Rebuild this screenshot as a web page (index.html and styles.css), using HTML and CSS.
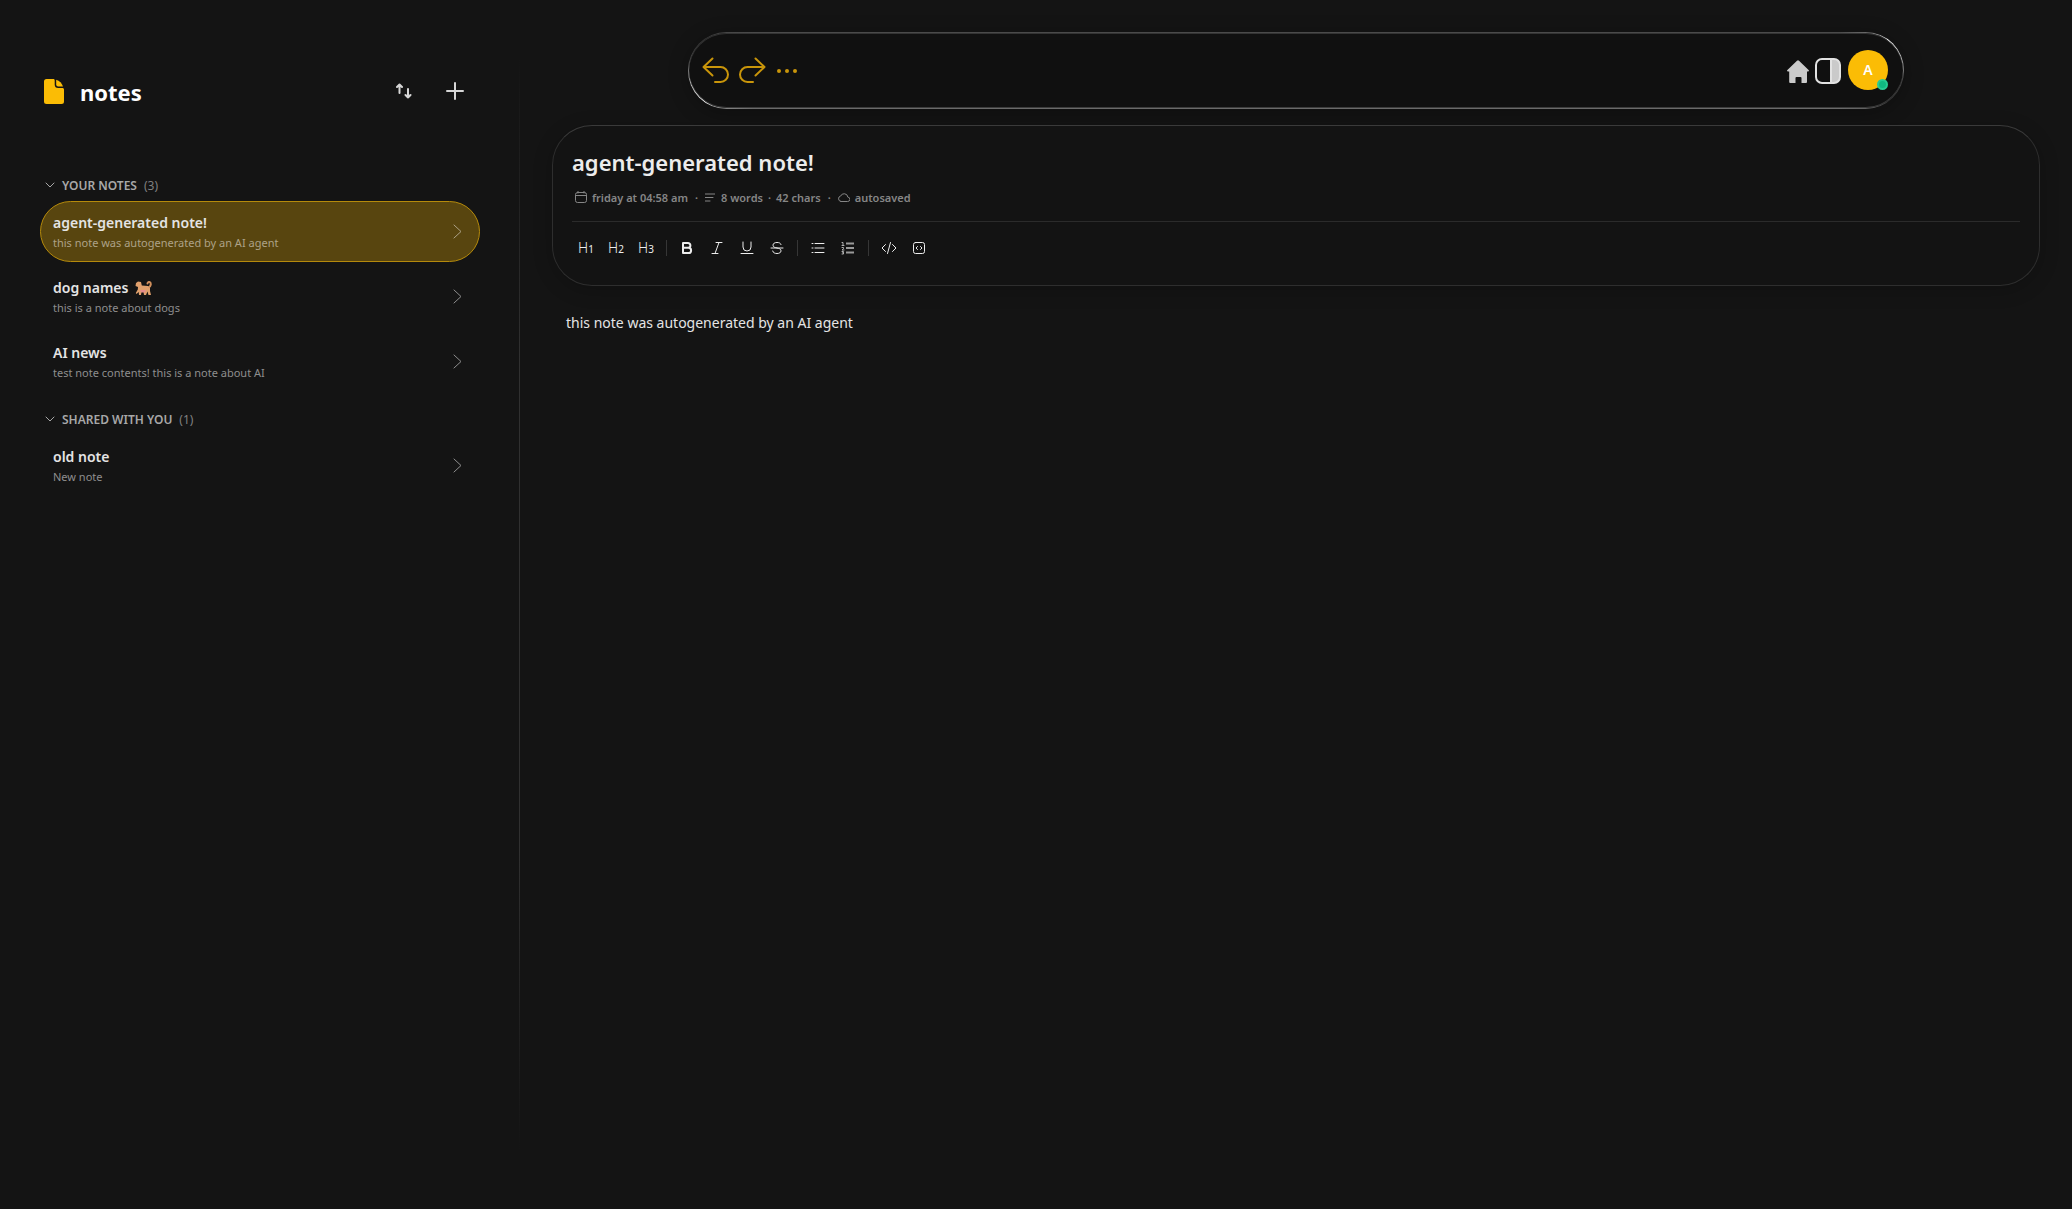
FILE: index.html
```
<!DOCTYPE html>
<html lang="en">
<head>
  <meta charset="UTF-8" />
  <meta name="viewport" content="width=device-width, initial-scale=1" />
  <title>notes</title>
  <link rel="stylesheet" href="styles.css">
</head>
<body>
  <div class="app">
    <aside class="sidebar">
      <header class="sidebar-header">
        <svg class="logo" viewBox="0 0 20 25" aria-hidden="true">
          <path d="M2.500 0h7c.8 0 1.200.7 1.200 1.500v4A3.500 3.500 0 0 0 14.200 9H18.500c.8 0 1.500.7 1.500 1.500V22.500a2.500 2.500 0 0 1-2.500 2.500h-15A2.500 2.500 0 0 1 0 22.500v-20A2.500 2.500 0 0 1 2.500 0z"/>
          <path d="M12.200.8c3.200 1 5.800 3.500 6.800 6.700h-4.800a2 2 0 0 1-2-2z"/>
        </svg>
        <h1>notes</h1>
        <button class="icon-btn" type="button" aria-label="Sort notes">
          <svg width="16" height="16" viewBox="0 0 16 16"><path d="M3.500 10V1.500M1 4l2.500-2.500L6 4M12 6v8.500M9.500 12l2.500 2.500 2.500-2.500"/></svg>
        </button>
        <button class="icon-btn" type="button" aria-label="New note">
          <svg width="18" height="18" viewBox="0 0 18 18"><path d="M9 1v16M1 9h16"/></svg>
        </button>
      </header>

      <nav class="note-groups">
        <section>
          <button class="group-title" type="button" aria-expanded="true">
            <svg width="10" height="6" viewBox="0 0 10 6"><path d="M1 1l4 4 4-4"/></svg>
            YOUR NOTES <span>(3)</span>
          </button>
          <a class="note active" href="#agent">
            <span class="note-text"><strong>agent-generated note!</strong><small>this note was autogenerated by an AI agent</small></span>
            <svg width="9" height="15" viewBox="0 0 9 15"><path d="M1 1l7 6.500L1 14"/></svg>
          </a>
          <a class="note" href="#dogs">
            <span class="note-text"><strong>dog names
              <svg class="dog" width="17" height="15" viewBox="0 0 17 15" aria-hidden="true">
                <path class="tail" d="M13.500 6.500c2.500-.5 3-5 1-5.500-1-.2-2 .3-2 1.500"/>
                <path class="fur" d="M1 2l2-1.500 3 .5.800 3.500L13 5l2 2v3l1 4h-2.500l-1-3.500L11 14H9l-.5-3H6.500L6 14H4l-.3-3L1.500 13 .8 12l2-3.500L3 6 .5 5z"/>
                <path class="belly" d="M5 9h6l-1 2.500H6z"/>
              </svg></strong><small>this is a note about dogs</small></span>
            <svg width="9" height="15" viewBox="0 0 9 15"><path d="M1 1l7 6.500L1 14"/></svg>
          </a>
          <a class="note" href="#ai-news">
            <span class="note-text"><strong>AI news</strong><small>test note contents! this is a note about AI</small></span>
            <svg width="9" height="15" viewBox="0 0 9 15"><path d="M1 1l7 6.500L1 14"/></svg>
          </a>
        </section>
        <section>
          <button class="group-title" type="button" aria-expanded="true">
            <svg width="10" height="6" viewBox="0 0 10 6"><path d="M1 1l4 4 4-4"/></svg>
            SHARED WITH YOU <span>(1)</span>
          </button>
          <a class="note" href="#old-note">
            <span class="note-text"><strong>old note</strong><small>New note</small></span>
            <svg width="9" height="15" viewBox="0 0 9 15"><path d="M1 1l7 6.500L1 14"/></svg>
          </a>
        </section>
      </nav>
    </aside>

    <main class="editor">
      <div class="topbar">
        <button class="history" type="button" aria-label="Undo">
          <svg width="28" height="28" viewBox="0 0 28 28"><path d="M10.500 1.500L1.500 10l9 8.500M2 10h16.500a7.500 7.500 0 0 1 0 15H13"/></svg>
        </button>
        <button class="history" type="button" aria-label="Redo">
          <svg width="28" height="28" viewBox="0 0 28 28"><path d="M17.500 1.500l9 8.500-9 8.500M26 10H9.500a7.500 7.500 0 0 0 0 15H15"/></svg>
        </button>
        <button class="more" type="button" aria-label="More">
          <svg width="20" height="4" viewBox="0 0 20 4"><circle cx="2" cy="2" r="2"/><circle cx="10" cy="2" r="2"/><circle cx="18" cy="2" r="2"/></svg>
        </button>
        <a class="home" href="#home" aria-label="Home">
          <svg width="22" height="24" viewBox="0 0 22 24"><path d="M10 .8a1.500 1.500 0 0 1 2 0l9.600 9.200c.7.700.3 1.500-.6 1.500h-1v10.500a1 1 0 0 1-1 1h-4.500v-5a1 1 0 0 0-1-1h-4a1 1 0 0 0-1 1v5H3.200a1 1 0 0 1-1-1V11.500H1c-.9 0-1.300-.8-.6-1.500z"/></svg>
        </a>
        <button class="panel" type="button" aria-label="Toggle panel">
          <svg width="26" height="26" viewBox="0 0 26 26"><path class="fill" d="M16 1h3a6 6 0 0 1 6 6v12a6 6 0 0 1-6 6h-3z"/><rect x="1" y="1" width="24" height="24" rx="6"/><path d="M16 1v24"/></svg>
        </button>
        <button class="avatar" type="button" aria-label="Account">A<span class="status"></span></button>
      </div>

      <section class="note-card">
        <h2>agent-generated note!</h2>
        <div class="meta">
          <svg width="12" height="12" viewBox="0 0 12 12"><rect x=".5" y="1.500" width="11" height="10" rx="2"/><path d="M.5 4.500h11M3 0v2M9 0v2"/></svg>
          <span class="date">friday at 04:58 am</span>
          <span class="dot">·</span>
          <svg class="lines" width="10" height="9" viewBox="0 0 10 9"><path d="M0 1h10M0 4.500h8M0 8h5"/></svg>
          <span class="words">8 words</span>
          <span>·</span>
          <span class="chars">42 chars</span>
          <span class="dot">·</span>
          <svg width="12" height="10" viewBox="0 0 12 10"><path d="M3 9.500h6.500a2.200 2.200 0 0 0 .3-4.400A3.700 3.700 0 0 0 2.700 4 2.800 2.800 0 0 0 3 9.500z"/></svg>
          <span class="saved">autosaved</span>
        </div>
        <div class="toolbar" role="toolbar" aria-label="Formatting">
          <button type="button" aria-label="Heading 1"><span class="heading">H<sub>1</sub></span></button>
          <button type="button" aria-label="Heading 2"><span class="heading">H<sub>2</sub></span></button>
          <button type="button" aria-label="Heading 3"><span class="heading">H<sub>3</sub></span></button>
          <span class="sep"></span>
          <button type="button" aria-label="Bold">
            <svg class="bold" viewBox="0 0 16 16"><path d="M4 3h5a2.300 2.300 0 0 1 0 4.800H4zM4 7.800h5.500a2.600 2.600 0 0 1 0 5.200H4z"/></svg>
          </button>
          <button type="button" aria-label="Italic">
            <svg viewBox="0 0 16 16"><path d="M7 2.500h6M3 13.500h6M10 2.500l-4 11"/></svg>
          </button>
          <button type="button" aria-label="Underline">
            <svg viewBox="0 0 16 16"><path d="M4 2v5a4 4 0 0 0 8 0V2M2 13.500h12"/></svg>
          </button>
          <button type="button" aria-label="Strikethrough">
            <svg viewBox="0 0 16 16"><path d="M12 4.500C11.500 3 10 2.500 8 2.500c-2.300 0-4 .9-4 2.700C4 9 12 7 12 10.800c0 1.800-1.700 2.700-4 2.700s-4-.8-4.300-2.500M2 8h12"/></svg>
          </button>
          <span class="sep"></span>
          <button type="button" aria-label="Bullet list">
            <svg viewBox="0 0 16 16"><path d="M5 3.500h9M5 8h9M5 12.500h9M2 3.500h1M2 8h1M2 12.500h1"/></svg>
          </button>
          <button type="button" aria-label="Numbered list">
            <svg class="numbered" viewBox="0 0 16 16"><path class="rows" d="M6 3.500h8M6 8h8M6 12.500h8"/><path d="M2 2.500h1v3M2 5.500h2M2 7.500h1.500v1.200L2 10h2M2 11.500h1.500v1.300H2.500M3.500 12.800V14H2"/></svg>
          </button>
          <span class="sep"></span>
          <button type="button" aria-label="Inline code">
            <svg viewBox="0 0 16 16"><path d="M4.500 4.500L1 8l3.500 3.500M11.500 4.500L15 8l-3.500 3.500M9.500 2.500l-3 11"/></svg>
          </button>
          <button type="button" aria-label="Code block">
            <svg viewBox="0 0 16 16"><rect x="2.500" y="2.500" width="11" height="11" rx="2"/><path d="M6.500 6.500L5 8l1.500 1.500M9.500 6.500L11 8 9.500 9.500"/></svg>
          </button>
        </div>
      </section>

      <div class="note-body" contenteditable="true" spellcheck="false" role="textbox" aria-label="Note">this note was autogenerated by an AI agent</div>
    </main>
  </div>
</body>
</html>
```

FILE: styles.css
```
* {
  box-sizing: border-box;
}
body {
  margin: 0;
  background: #141414;
  color: #e6e6e6;
  font-family: "Noto Sans", "Open Sans", sans-serif;
}
h1, h2 {
  margin: 0;
}
button {
  padding: 0;
  border: none;
  background: none;
  color: inherit;
  font-family: inherit;
  cursor: pointer;
}
svg {
  display: block;
  flex: none;
  fill: none;
  stroke: currentColor;
  stroke-linecap: round;
  stroke-linejoin: round;
}
.app {
  display: grid;
  grid-template-columns: 520px 1fr;
  min-height: 100vh;
}

/* sidebar */
.sidebar {
  padding: 66px 39px 0 40px;
  border-right: 1px solid;
  border-image: linear-gradient(transparent 5%, #303030 30%, #303030 70%, transparent 95%) 1;
}
.sidebar-header {
  display: flex;
  align-items: center;
  height: 50px;
  padding: 0 0 0 4px;
}
.logo {
  width: 20px;
  height: 25px;
  margin-right: 16px;
  fill: #fbbc05;
  stroke: none;
}
.sidebar-header h1 {
  margin-right: auto;
  padding-top: 2px;
  color: #fff;
  font-size: 22px;
  line-height: 32px;
}
.icon-btn {
  display: grid;
  place-items: center;
  width: 52px;
  height: 50px;
  color: #d6d6d6;
}
.icon-btn svg {
  stroke-width: 2;
}
.icon-btn:last-child {
  width: 50px;
}
.note-groups {
  margin-top: 61px;
}
.group-title {
  display: flex;
  align-items: center;
  width: 100%;
  height: 16px;
  margin: 19px 0 8px;
  padding-left: 5px;
  gap: 7px;
  color: #a8a8a8;
  font-size: 12px;
  font-weight: 600;
}
.group-title span {
  color: #808080;
  font-weight: 400;
}
.note {
  display: flex;
  align-items: center;
  justify-content: space-between;
  height: 61px;
  margin-bottom: 4px;
  padding: 0 17px 0 12px;
  border: 1px solid transparent;
  border-radius: 31px;
  color: #8e8e8e;
  text-decoration: none;
}
.note.active {
  border-color: #b58a0b;
  background: #58450f;
  color: #ada287;
}
.note-text {
  display: grid;
  padding-top: 3px;
}
.note strong {
  display: flex;
  align-items: center;
  gap: 7px;
  color: #e4e4e4;
  font-size: 14px;
  font-weight: 600;
  line-height: 20px;
}
.note small {
  font-size: 11px;
  line-height: 20px;
}
.dog {
  stroke: none;
}
.dog .fur {
  fill: #e0a06c;
}
.dog .belly {
  fill: #e58b8b;
}
.dog .tail {
  stroke: #d08f5c;
  stroke-width: 2;
}

/* top bar */
.editor {
  padding: 32px 32px 0;
}
.topbar {
  display: flex;
  align-items: center;
  height: 77px;
  margin: 0 136px 16px;
  padding: 0 15px 0 13px;
  border: 1px solid transparent;
  border-radius: 39px;
  background:
    linear-gradient(#101010, #101010) padding-box,
    conic-gradient(#4a4a4a 86deg, #eee 87deg, #aaa 89deg, #444 91deg, #333 93deg, #6a6a6a 94deg, #6a6a6a 266deg, #eee 267deg, #aaa 269deg, #444 271deg, #333 273deg, #4a4a4a 274deg) border-box;
  box-shadow: inset 0 1px #333, inset 0 -1px #3c3c3c, 0 4px 20px #0004;
}
.history {
  margin-right: 8px;
  color: #c9950a;
}
.history svg {
  stroke-width: 2;
}
.more {
  margin-left: 3px;
  color: #c9950a;
}
.more svg {
  fill: currentColor;
  stroke: none;
}
.home {
  margin-left: auto;
  padding-top: 3px;
  color: #cacaca;
}
.home svg {
  fill: currentColor;
  stroke: none;
}
.panel {
  margin: 0 7px 0 6px;
  color: #e2e2e2;
}
.panel svg {
  stroke-width: 2;
}
.panel .fill {
  fill: #cacaca;
  stroke: none;
}
.avatar {
  position: relative;
  width: 40px;
  height: 40px;
  margin-bottom: 2px;
  border-radius: 50%;
  background: #fbbc05;
  color: #fff;
  font-size: 14px;
  font-weight: 600;
}
.status {
  position: absolute;
  right: 0;
  bottom: 0;
  width: 11px;
  height: 11px;
  border: 2px solid #27cb93;
  border-radius: 50%;
  background: #10b981;
}

/* note header card */
.note-card {
  height: 161px;
  padding: 18px 19px;
  border: 1px solid #2e2e2e;
  border-top-color: #3a3a3a;
  border-radius: 40px;
  background: #131313;
  box-shadow: 0 4px 20px #0003;
}
.note-card h2 {
  color: #ececec;
  font-size: 22px;
  font-weight: 600;
  line-height: 36px;
}
.meta {
  display: flex;
  align-items: center;
  height: 42px;
  padding: 0 3px 7px;
  border-bottom: 1px solid #2b2b2b;
  gap: 5px;
  color: #868686;
  font-size: 11px;
  font-weight: 600;
}
.meta .dot {
  margin: 0 2px;
}
.meta .lines {
  margin-right: 1px;
}
.toolbar {
  display: flex;
  align-items: center;
  margin-top: 12px;
  gap: 2px;
}
.toolbar button {
  display: grid;
  place-items: center;
  width: 28px;
  height: 28px;
  color: #ededed;
}
.toolbar svg {
  width: 16px;
  height: 16px;
}
.toolbar .bold {
  stroke-width: 2;
}
.numbered {
  color: #b0b0b0;
}
.numbered .rows {
  stroke: #999;
  stroke-width: 2;
  stroke-linecap: butt;
}
.heading {
  font-size: 14px;
  font-weight: 300;
  line-height: 16px;
}
.heading sub {
  font-size: 10px;
  font-weight: 400;
  line-height: 10px;
  vertical-align: baseline;
}
.sep {
  width: 1px;
  height: 16px;
  margin: 0 4px;
  background: #363636;
}
.note-body {
  padding: 25px 14px;
  outline: none;
  color: #e4e4e4;
  font-size: 14px;
  line-height: 24px;
}
```
